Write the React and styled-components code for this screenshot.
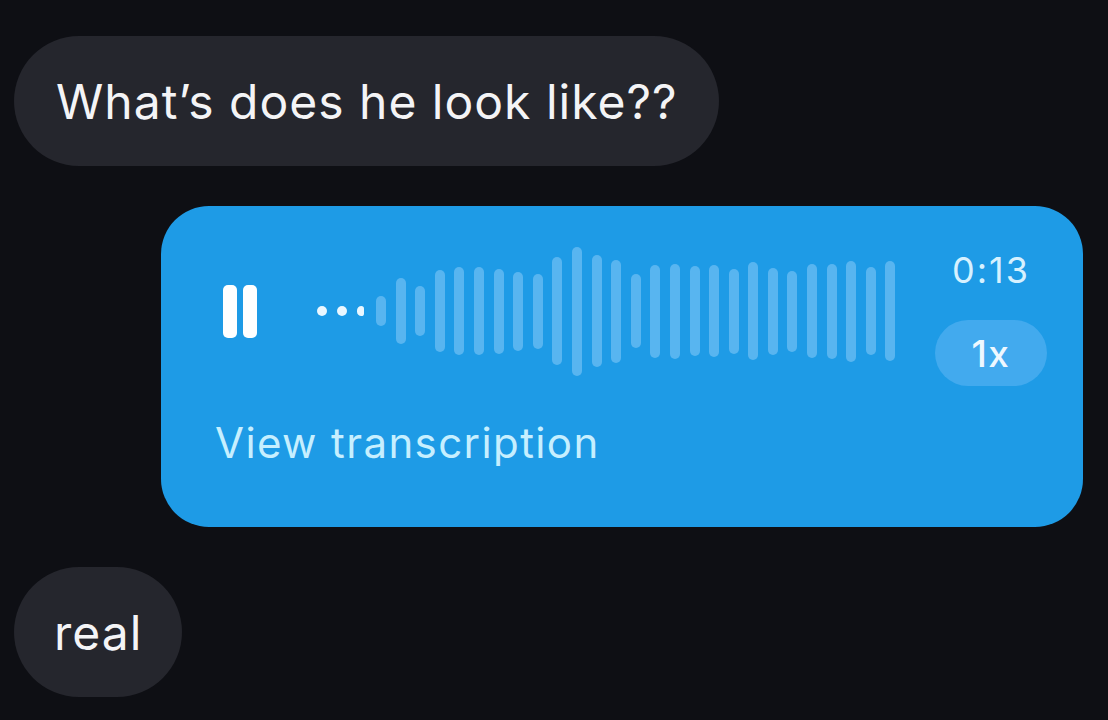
import styled, { createGlobalStyle } from 'styled-components';

const GlobalStyle = createGlobalStyle`
    html, body {
        margin: 0;
        padding: 0;
        background: #0e0f14;
    }
    body {
        font-family: Inter, "Noto Sans", sans-serif;
        -webkit-font-smoothing: antialiased;
    }
`;

const waveHeights = [
    30, 66, 50, 82, 88, 88, 85, 79, 75, 108, 129, 112, 103, 74,
    93, 95, 90, 92, 85, 98, 87, 81, 94, 95, 101, 88, 100,
];

function App() {
    return (
        <>
            <GlobalStyle />
            <Thread>
                <IncomingBubble $pad='42px'>What’s does he look like??</IncomingBubble>

                <VoiceBubble>
                    <PlayerRow>
                        <PauseButton>
                            <span />
                            <span />
                        </PauseButton>

                        <Dots>
                            <Dot />
                            <Dot />
                            <Dot $clip />
                        </Dots>

                        <Wave>
                            {waveHeights.map((h, i) => (
                                <Bar key={i} style={{ height: `${h}px` }} />
                            ))}
                        </Wave>

                        <Meta>
                            <Time>0:13</Time>
                            <Speed>1x</Speed>
                        </Meta>
                    </PlayerRow>

                    <Transcription>View transcription</Transcription>
                </VoiceBubble>

                <IncomingBubble $pad='40px'>real</IncomingBubble>
            </Thread>
        </>
    );
}

export default App;

const Thread = styled.div`
    display: flex;
    flex-direction: column;
    align-items: flex-start;
    gap: 40px;
    padding: 36px 0 0 14px;
    width: 1108px;
    height: 720px;
    box-sizing: border-box;
    overflow: hidden;
`;

const IncomingBubble = styled.div`
    display: flex;
    align-items: center;
    height: 130px;
    box-sizing: border-box;
    padding: 0 ${({ $pad }) => $pad};
    border-radius: 65px;
    background: #25262d;
    color: #f4f4f6;
    font-size: 48px;
    letter-spacing: 1px;
    white-space: nowrap;
`;

const VoiceBubble = styled.div`
    margin-left: 147px;
    width: 922px;
    box-sizing: border-box;
    padding: 30px 36px 63px 54px;
    border-radius: 48px;
    background: #1e9be6;
`;

const PlayerRow = styled.div`
    display: flex;
    align-items: center;
`;

const PauseButton = styled.div`
    display: flex;
    gap: 6px;
    margin-left: 8px;

    span {
        width: 14px;
        height: 53px;
        border-radius: 5px;
        background: #ffffff;
    }
`;

const Dots = styled.div`
    display: flex;
    align-items: center;
    gap: 10px;
    margin-left: 60px;
`;

const Dot = styled.span`
    width: ${({ $clip }) => $clip ? '7px' : '10px'};
    height: 10px;
    border-radius: ${({ $clip }) => $clip ? '5px 3px 3px 5px' : '50%'};
    background: #eaf7ff;
`;

const Wave = styled.div`
    display: flex;
    align-items: center;
    gap: 9.6px;
    margin-left: 12px;
`;

const Bar = styled.span`
    width: 10px;
    border-radius: 5px;
    background: #58b5f0;
`;

const Meta = styled.div`
    display: flex;
    flex-direction: column;
    align-items: center;
    gap: 32px;
    margin: 16px 0 0 auto;
    width: 112px;
`;

const Time = styled.div`
    font-size: 36px;
    line-height: 36px;
    letter-spacing: 2px;
    color: #d6f1ff;
`;

const Speed = styled.div`
    display: flex;
    align-items: center;
    justify-content: center;
    width: 112px;
    height: 66px;
    border-radius: 33px;
    background: #42aaee;
    color: #eef8ff;
    font-size: 37px;
    font-weight: 500;
    letter-spacing: 1.5px;
`;

const Transcription = styled.div`
    margin-top: 36px;
    font-size: 42px;
    line-height: 42px;
    color: #c6efff;
    letter-spacing: 1.4px;
`;
